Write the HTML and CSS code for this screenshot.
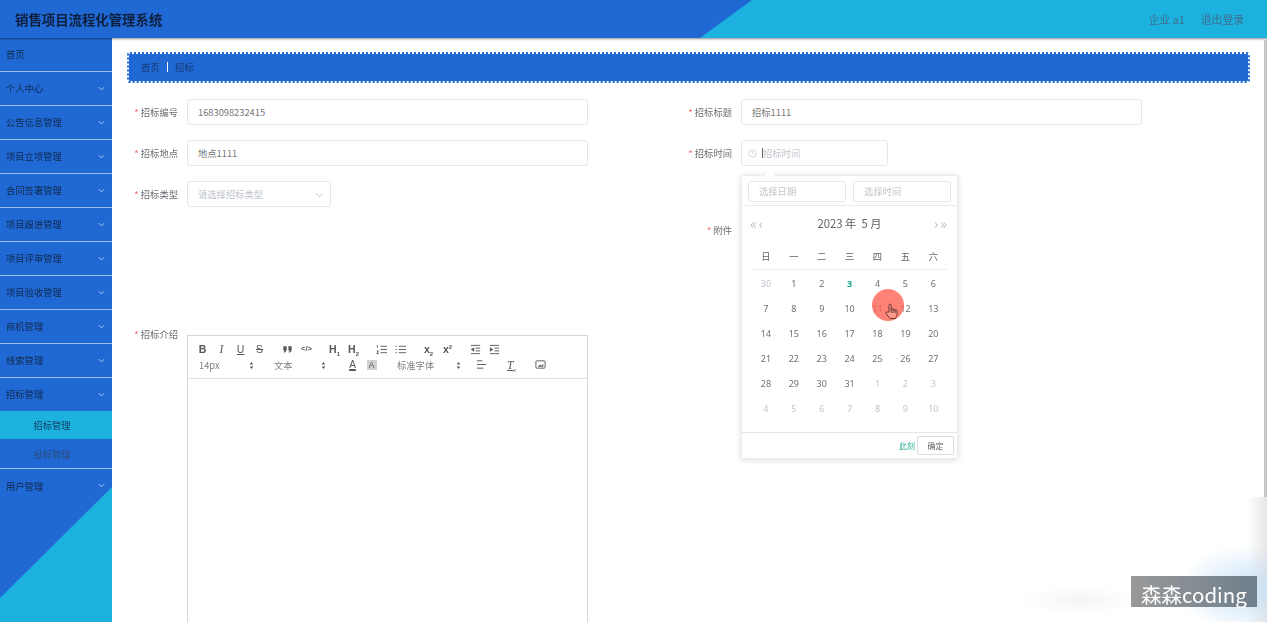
FILE: index.html
```html
<!DOCTYPE html>
<html lang="zh-CN">
<head>
  <meta charset="UTF-8">
  <title>销售项目流程化管理系统</title>
  <link rel="stylesheet" href="styles.css">
</head>
<body>

<header class="topbar">
  <h1 class="brand">销售项目流程化管理系统</h1>
  <div class="user-links">
    <span>企业 a1</span>
    <span>退出登录</span>
  </div>
</header>

<div class="layout">
  <nav class="sidebar">
    <div class="menu-item">首页</div>
    <div class="menu-item has-sub">个人中心<svg class="chev" viewBox="0 0 8 5"><path d="M1 1l3 3 3-3"/></svg></div>
    <div class="menu-item has-sub">公告信息管理<svg class="chev" viewBox="0 0 8 5"><path d="M1 1l3 3 3-3"/></svg></div>
    <div class="menu-item has-sub">项目立项管理<svg class="chev" viewBox="0 0 8 5"><path d="M1 1l3 3 3-3"/></svg></div>
    <div class="menu-item has-sub">合同签署管理<svg class="chev" viewBox="0 0 8 5"><path d="M1 1l3 3 3-3"/></svg></div>
    <div class="menu-item has-sub">项目跟进管理<svg class="chev" viewBox="0 0 8 5"><path d="M1 1l3 3 3-3"/></svg></div>
    <div class="menu-item has-sub">项目评审管理<svg class="chev" viewBox="0 0 8 5"><path d="M1 1l3 3 3-3"/></svg></div>
    <div class="menu-item has-sub">项目验收管理<svg class="chev" viewBox="0 0 8 5"><path d="M1 1l3 3 3-3"/></svg></div>
    <div class="menu-item has-sub">商机管理<svg class="chev" viewBox="0 0 8 5"><path d="M1 1l3 3 3-3"/></svg></div>
    <div class="menu-item has-sub">线索管理<svg class="chev" viewBox="0 0 8 5"><path d="M1 1l3 3 3-3"/></svg></div>
    <div class="menu-group">
      <div class="menu-item has-sub">招标管理<svg class="chev" viewBox="0 0 8 5"><path d="M1 1l3 3 3-3"/></svg></div>
      <div class="sub-item active">招标管理</div>
      <div class="sub-item">投标管理</div>
    </div>
    <div class="menu-item has-sub last">用户管理<svg class="chev" viewBox="0 0 8 5"><path d="M1 1l3 3 3-3"/></svg></div>
  </nav>

  <main class="content">
    <div class="crumbs"><span>首页</span><i class="crumb-sep"></i><span>招标</span></div>

    <form class="form">
      <div class="col-left">
        <div class="row">
          <label class="req">招标编号</label>
          <div class="input">1683098232415</div>
        </div>
        <div class="row">
          <label class="req">招标地点</label>
          <div class="input">地点1111</div>
        </div>
        <div class="row">
          <label class="req">招标类型</label>
          <div class="input select placeholder">请选择招标类型
            <svg class="select-chev" viewBox="0 0 10 6"><path d="M1 1l4 4 4-4"/></svg>
          </div>
        </div>
        <div class="row row-editor">
          <label class="req">招标介绍</label>
          <div class="editor">
            <div class="toolbar">
              <div class="tool-row">
                <span class="tool b">B</span>
                <span class="tool i">I</span>
                <span class="tool u">U</span>
                <span class="tool s">S</span>
                <span class="tool group">
                  <svg viewBox="0 0 12 12"><path class="fill" d="M1.500 2.500h3.500v3.500c0 2-1 3-2.700 3.500L1.800 8.500c.8-.4 1.200-.9 1.200-1.500H1.500zM7 2.500h3.500v3.500c0 2-1 3-2.700 3.500L7.300 8.500c.8-.4 1.200-.9 1.200-1.500H7z"/></svg>
                </span>
                <span class="tool code">&lt;/&gt;</span>
                <span class="tool h group">H<sub>1</sub></span>
                <span class="tool h">H<sub>2</sub></span>
                <span class="tool group">
                  <svg viewBox="0 0 12 12"><path d="M5 2.500h7M5 6h7M5 9.500h7M1.500 1v3M1 7.500h1.500l-1.500 3h2"/></svg>
                </span>
                <span class="tool">
                  <svg viewBox="0 0 12 12"><path d="M4 2.500h8M4 6h8M4 9.500h8M.5 2.500h1.500M.5 6h1.500M.5 9.500h1.500"/></svg>
                </span>
                <span class="tool x group">x<sub>2</sub></span>
                <span class="tool x">x<sup>2</sup></span>
                <span class="tool group">
                  <svg viewBox="0 0 12 12"><path d="M1 1.500h10M6 4.500h5M6 7.500h5M1 10.500h10"/><path class="fill" d="M4.500 3.500L1 6l3.500 2.500z"/></svg>
                </span>
                <span class="tool">
                  <svg viewBox="0 0 12 12"><path d="M1 1.500h10M6 4.500h5M6 7.500h5M1 10.500h10"/><path class="fill" d="M1 3.500L4.500 6 1 8.500z"/></svg>
                </span>
              </div>
              <div class="tool-row">
                <span class="picker">14px<svg viewBox="0 0 6 10"><path class="fill" d="M3 0l2.500 3.500h-5zM3 10L.5 6.500h5z"/></svg></span>
                <span class="picker text-picker">文本<svg viewBox="0 0 6 10"><path class="fill" d="M3 0l2.500 3.500h-5zM3 10L.5 6.500h5z"/></svg></span>
                <span class="tool color">A</span>
                <span class="tool bg-color">A</span>
                <span class="picker font-picker">标准字体<svg viewBox="0 0 6 10"><path class="fill" d="M3 0l2.500 3.500h-5zM3 10L.5 6.500h5z"/></svg></span>
                <span class="tool align">
                  <svg viewBox="0 0 12 12"><path d="M1 2h6M1 6h10M1 10h7"/></svg>
                </span>
                <span class="tool clean">T<sub>x</sub></span>
                <span class="tool image">
                  <svg viewBox="0 0 12 12"><rect x="1" y="2" width="10" height="8" rx="1"/><path class="fill" d="M3 8.500l2.500-2.500 1.500 1.500L9 5v3.500z"/></svg>
                </span>
              </div>
            </div>
            <div class="editor-body"></div>
          </div>
        </div>
      </div>

      <div class="col-right">
        <div class="row">
          <label class="req">招标标题</label>
          <div class="input">招标1111</div>
        </div>
        <div class="row date-row">
          <label class="req">招标时间</label>
          <div class="input date placeholder">
            <svg class="clock" viewBox="0 0 10 10"><circle cx="5" cy="5" r="4"/><path d="M5 2.500V5l1.800 1"/></svg>
            <i class="caret"></i>招标时间
          </div>

          <div class="picker-pop">
            <div class="pop-arrow"></div>
            <div class="pop-inputs">
              <div class="pop-input">选择日期</div>
              <div class="pop-input">选择时间</div>
            </div>
            <div class="pop-head">
              <span class="pop-nav">«‹</span>
              <span class="pop-title">2023 年&nbsp;&nbsp;5 月</span>
              <span class="pop-nav">›»</span>
            </div>
            <div class="weekdays">
              <span>日</span><span>一</span><span>二</span><span>三</span><span>四</span><span>五</span><span>六</span>
            </div>
            <div class="days">
              <span class="off">30</span><span>1</span><span>2</span><span class="today">3</span><span>4</span><span>5</span><span>6</span>
              <span>7</span><span>8</span><span>9</span><span>10</span><span>11</span><span>12</span><span>13</span>
              <span>14</span><span>15</span><span>16</span><span>17</span><span>18</span><span>19</span><span>20</span>
              <span>21</span><span>22</span><span>23</span><span>24</span><span>25</span><span>26</span><span>27</span>
              <span>28</span><span>29</span><span>30</span><span>31</span><span class="off">1</span><span class="off">2</span><span class="off">3</span>
              <span class="off">4</span><span class="off">5</span><span class="off">6</span><span class="off">7</span><span class="off">8</span><span class="off">9</span><span class="off">10</span>
            </div>
            <div class="pop-foot">
              <span class="now">此刻</span>
              <span class="ok">确定</span>
            </div>
            <div class="click-mark">
              <svg class="hand" viewBox="0 0 14 16"><path d="M5 9V2.200a1.100 1.100 0 0 1 2.200 0V7v-.5a1 1 0 0 1 2 0v.7a1 1 0 0 1 2 0v.6a.9.9 0 0 1 1.800 0V11c0 2-1 3-1.500 4.500H6L2 10.500c-.8-1 .6-2.200 1.500-1.300z"/><path d="M7.200 7v3M9.200 7.200V10M11.200 7.800V10"/></svg>
            </div>
          </div>
        </div>
        <div class="row row-file">
          <label class="req">附件</label>
        </div>
      </div>
    </form>
  </main>
</div>

<div class="scroll-thumb"></div>
<div class="corner-fade"></div>
<div class="watermark">森森coding</div>

</body>
</html>
```

FILE: styles.css
```css
* {
  box-sizing: border-box;
}

html, body {
  margin: 0;
  height: 100%;
  overflow: hidden;
}

body {
  font-family: "Noto Sans CJK SC", "Noto Sans", sans-serif;
  font-size: 9.3px;
  color: #606266;
  background: #fff;
}

/* the reference is a soft video frame */
.topbar, .layout {
  filter: blur(0.35px);
}

/* top bar */
.topbar {
  position: relative;
  height: 38px;
  background: #2069d5;
  display: flex;
  align-items: center;
  justify-content: space-between;
  padding: 0 23px 0 15px;
  box-shadow: 0 1px 2px rgba(0,0,0,0.45);
  z-index: 2;
}

.topbar::before {
  content: "";
  position: absolute;
  inset: 0;
  background: #1cb1de;
  clip-path: polygon(752px 0, 100% 0, 100% 100%, 700px 100%);
}

.brand {
  position: relative;
  margin: 0;
  font-size: 13.4px;
  font-weight: 700;
  color: #0d1f3c;
}

.user-links {
  position: relative;
  display: flex;
  gap: 16px;
  font-size: 10.8px;
  color: #3f6f8e;
}

.layout {
  display: flex;
  height: 584px;
}

/* left menu */
.sidebar {
  position: relative;
  width: 112px;
  flex: none;
  background: #2069d5;
  color: #10294d;
}

.sidebar::after {
  content: "";
  position: absolute;
  inset: 0;
  background: #1cb1de;
  clip-path: polygon(100% 449px, 100% 100%, 0 100%, 0 560px);
}

.menu-item {
  position: relative;
  z-index: 1;
  height: 34px;
  display: flex;
  align-items: center;
  padding: 0 6px 2px;
  border-bottom: 1px solid rgba(255,255,255,0.55);
}

.menu-item.last {
  padding-bottom: 0;
  border-bottom: 0;
}

.menu-group {
  position: relative;
  z-index: 1;
  border-bottom: 1px solid rgba(255,255,255,0.55);
}

.menu-group .menu-item {
  height: 33px;
  padding-bottom: 1px;
  border-bottom: 0;
}

.chev {
  position: absolute;
  right: 7px;
  top: 14px;
  width: 7px;
  height: 5px;
  fill: none;
  stroke: #bcd8f5;
  stroke-width: 1;
}

.sub-item {
  height: 29px;
  display: flex;
  align-items: center;
  justify-content: center;
  padding-right: 8px;
  color: #2b4a78;
}

.sub-item.active {
  height: 28px;
  background: #1cb1de;
  color: #0e3c5f;
}

/* page content */
.content {
  flex: 1;
  padding: 14px 17px 0 15px;
  min-width: 0;
  background: radial-gradient(ellipse 60px 14px at 968px 562px, #f5f5f5, transparent);
}

.crumbs {
  height: 31px;
  background: #2069d5;
  background-clip: padding-box;
  border: 2px dotted #2069d5;
  border-radius: 3px;
  display: flex;
  align-items: center;
  padding: 0 0 2px 12px;
  color: #17396f;
}

.crumb-sep {
  width: 1.500px;
  height: 10px;
  margin: 0 7px;
  background: #fff;
}

.form {
  display: flex;
  margin-top: 16px;
}

.col-left {
  width: 554px;
  flex: none;
}

.col-right {
  flex: 1;
}

.row {
  display: flex;
  margin-bottom: 15px;
}

.row > label {
  flex: none;
  width: 60px;
  height: 26px;
  line-height: 26px;
  padding-right: 9px;
  text-align: right;
  color: #6b6d72;
}

.req::before {
  content: "* ";
  color: #f56c6c;
}

.input {
  position: relative;
  width: 401px;
  height: 26px;
  display: flex;
  align-items: center;
  padding: 0 10px;
  border: 1px solid #e4e7ed;
  border-radius: 3px;
  background: #fff;
  color: #777;
}

.placeholder {
  color: #c0c4cc;
}

.select {
  width: 144px;
}

.select-chev {
  position: absolute;
  right: 6px;
  top: 10px;
  width: 9px;
  height: 6px;
  fill: none;
  stroke: #c0c4cc;
}

.row-editor {
  margin-top: 114px;
}

.row-file {
  margin-top: 51px;
}

.date-row {
  position: relative;
}

.date {
  width: 147px;
  padding-left: 6px;
}

.clock {
  width: 9px;
  height: 9px;
  margin-right: 5px;
  fill: none;
  stroke: #c0c4cc;
  stroke-width: 0.8;
}

.caret {
  width: 1px;
  height: 10px;
  background: #606266;
}

/* rich text editor */
.editor {
  width: 401px;
  margin-top: 14px;
  border: 1px solid #d6d6d6;
  border-bottom: 0;
}

.toolbar {
  height: 43px;
  padding: 5px 5px 0;
  border-bottom: 1px solid #e2e2e2;
}

.tool-row {
  display: flex;
  height: 16px;
}

.tool-row:first-child {
  height: 15.500px;
}

.tool {
  display: block;
  flex: none;
  width: 19px;
  height: 16px;
  line-height: 16px;
  text-align: center;
  font-family: "Liberation Sans", sans-serif;
  font-size: 10.500px;
  color: #555;
}

.tool svg {
  display: block;
  width: 11px;
  height: 11px;
  margin: 2.500px auto 0;
  fill: none;
  stroke: #555;
  stroke-width: 1;
}

.tool svg .fill, .picker svg .fill {
  fill: #555;
  stroke: none;
}

.tool sub, .tool sup {
  font-size: 6px;
  line-height: 0;
}

.group {
  margin-left: 9px;
}

.b, .h, .x {
  font-weight: 700;
}

.i {
  font-style: italic;
  font-family: "Liberation Serif", serif;
  font-size: 11.500px;
}

.u {
  text-decoration: underline;
}

.s {
  text-decoration: line-through;
}

.code {
  font-size: 7.500px;
  font-weight: 700;
}

.picker {
  position: relative;
  flex: none;
  width: 63px;
  height: 16px;
  line-height: 16px;
  padding-left: 6px;
  color: #808080;
}

.picker svg {
  position: absolute;
  right: 2px;
  top: 5px;
  width: 5px;
  height: 7px;
}

.text-picker {
  margin-left: 9px;
  padding-left: 9px;
}

.font-picker {
  width: 73px;
  margin-left: 9px;
  padding-left: 7px;
}

.color {
  text-decoration: underline;
  text-decoration-thickness: 1.500px;
  font-size: 10px;
  margin-left: 15px;
}

.bg-color {
  font-size: 8.500px;
  background: linear-gradient(#d0d0d0, #d0d0d0) center / 10px 10px no-repeat;
}

.align {
  margin-left: 9px;
}

.clean {
  margin-left: 11px;
  font-family: "Liberation Serif", serif;
  font-style: italic;
  text-decoration: underline;
  font-size: 11.500px;
}

.image {
  margin-left: 10px;
}

.editor-body {
  height: 400px;
}

/* date picker popup */
.picker-pop {
  position: absolute;
  left: 60px;
  top: 35px;
  width: 217px;
  height: 284px;
  z-index: 3;
  background: #fff;
  border: 1px solid #e8ebf0;
  border-radius: 2px;
  box-shadow: 0 1px 6px rgba(0,0,0,0.14);
}

.pop-arrow {
  position: absolute;
  left: 24px;
  top: -4px;
  width: 7px;
  height: 7px;
  background: #fff;
  transform: rotate(45deg);
}

.pop-inputs {
  position: relative;
  display: flex;
  gap: 7px;
  height: 30px;
  padding: 5px 6px 0;
  border-bottom: 1px solid #e8ebf0;
}

.pop-input {
  flex: 1;
  height: 21px;
  line-height: 19px;
  padding-left: 10px;
  border: 1px solid #e4e7ed;
  border-radius: 3px;
  color: #c0c4cc;
}

.pop-head {
  display: flex;
  justify-content: space-between;
  align-items: center;
  height: 34px;
  padding: 0 8px;
}

.pop-title {
  font-size: 11.300px;
  color: #606266;
}

.pop-nav {
  font-size: 14px;
  letter-spacing: 2px;
  color: #b4b8c0;
}

.weekdays, .days {
  display: grid;
  grid-template-columns: repeat(7, 27.900px);
  margin: 0 10px;
  text-align: center;
}

.weekdays {
  height: 30px;
  line-height: 33px;
  border-bottom: 1px solid #ebeef5;
}

.days {
  grid-auto-rows: 25px;
  margin-top: 1px;
  line-height: 26px;
  font-family: "Noto Sans", sans-serif;
  font-size: 9px;
  color: #707070;
}

.off {
  color: #c0c4cc;
}

.today {
  color: #19a88f;
  font-weight: 700;
}

.pop-foot {
  position: absolute;
  left: 0;
  right: 0;
  bottom: 0;
  height: 26px;
  display: flex;
  justify-content: flex-end;
  align-items: center;
  gap: 2px;
  padding-right: 3px;
  border-top: 1px solid #e4e7ed;
}

.now {
  color: #2fae9a;
  font-size: 8px;
}

.ok {
  width: 37px;
  height: 19px;
  line-height: 17px;
  text-align: center;
  font-size: 8px;
  border: 1px solid #dcdfe6;
  border-radius: 2px;
}

/* screen recording pointer */
.click-mark {
  position: absolute;
  left: 130px;
  top: 113px;
  width: 32px;
  height: 32px;
  border-radius: 50%;
  background: rgba(255,95,80,0.78);
}

.hand {
  position: absolute;
  left: 12px;
  top: 14px;
  width: 14px;
  height: 16px;
  fill: #ff9a8c;
  stroke: #4a2020;
  stroke-width: 0.8;
}

/* overlays on the page */
.scroll-thumb {
  position: absolute;
  right: 0;
  top: 40px;
  width: 3px;
  height: 457px;
  background: #c6c6ca;
}

.corner-fade {
  position: absolute;
  right: 0;
  top: 497px;
  width: 80px;
  bottom: 0;
  background:
    radial-gradient(ellipse 70px 45px at 75% 74%, rgba(190,220,245,0.8), transparent),
    linear-gradient(90deg, transparent 75%, #e6e6e6 100%);
}

.watermark {
  position: absolute;
  left: 1131px;
  top: 576px;
  width: 126px;
  height: 31px;
  line-height: 36px;
  padding-left: 10px;
  font-size: 20.500px;
  white-space: nowrap;
  color: #fff;
  background: linear-gradient(90deg, #999, #6f7f8c);
}
```
